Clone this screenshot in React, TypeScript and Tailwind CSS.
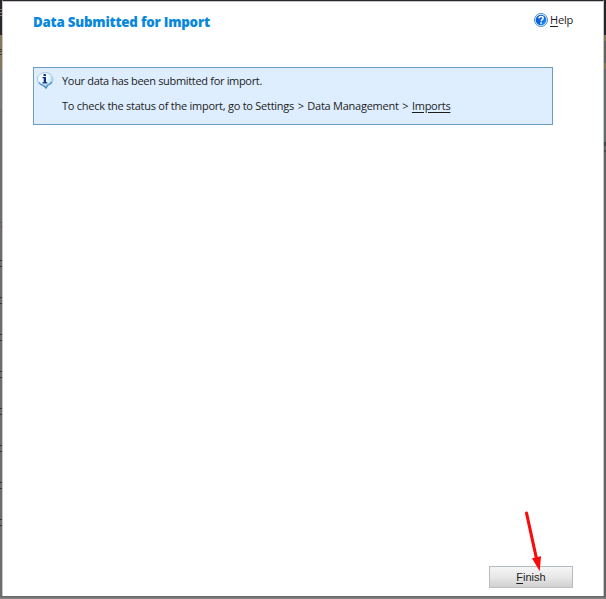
const TICKS = [260, 297, 334, 371, 408, 445, 482, 519];

function InfoIcon() {
  return (
    <svg width="17" height="17" viewBox="0 0 17 17" className="block shrink-0">
      <defs>
        <radialGradient id="bubble" cx="0.4" cy="0.3" r="0.75">
          <stop offset="0" stopColor="#ffffff" />
          <stop offset="0.5" stopColor="#e6f4fd" />
          <stop offset="1" stopColor="#7db9e4" />
        </radialGradient>
      </defs>
      <path d="M8.200 .5C12.600.5 16 3.500 16 7.300c0 2.900-2 5.200-5 6.200L9 16.500 6.400 13.700C3 12.900.4 10.400.4 7.300.4 3.500 3.800.5 8.200.5Z" fill="url(#bubble)" stroke="#9fbdd4" strokeWidth="0.800" />
      <path d="M1.800 10.500c1.200 1.800 3 2.700 4.800 3L9 16l1.400-2.800c2-.6 3.700-1.800 4.400-3.300" fill="none" stroke="#4389bc" strokeWidth="1.200" />
      <rect x="6.500" y="2" width="2.500" height="2" rx="0.500" fill="#08368e" />
      <path d="M5.500 5H9v5.200h1.300v1.300H5.500v-1.300h1.200V6.300H5.500Z" fill="#08368e" />
    </svg>
  );
}

function HelpIcon() {
  return (
    <svg width="14" height="14" viewBox="0 0 14 14" className="block shrink-0">
      <defs>
        <linearGradient id="help" x1="0" y1="0" x2="1" y2="1">
          <stop offset="0" stopColor="#0757c8" />
          <stop offset="0.55" stopColor="#0866df" />
          <stop offset="1" stopColor="#35a7ff" />
        </linearGradient>
      </defs>
      <circle cx="7" cy="7" r="6.500" fill="#e8f6ff" stroke="#3f7fb8" strokeWidth="0.900" />
      <circle cx="7" cy="7" r="5.300" fill="url(#help)" />
      <path d="M4.900 5.400C5 4 6 3.500 7.100 3.500c1.200 0 2.100.6 2.100 1.700 0 1.400-2 1.500-2 3" fill="none" stroke="#fff" strokeWidth="1.500" />
      <rect x="6.300" y="9.300" width="1.600" height="1.500" fill="#fff" />
    </svg>
  );
}

function LeftEdge() {
  return (
    <div className="relative w-0.5 shrink-0 overflow-hidden bg-[#6d6d6d]">
      <div className="h-[35px] bg-[#29272b]" />
      <div className="h-[34px] bg-[#84795a]" />
      <div className="h-10 bg-[#777777]" />
      {[9, 12, 15].map((y) => (
        <div key={y} className="absolute left-0 h-px w-0.5 bg-[#85747c]" style={{ top: y }} />
      ))}
      {[49, 51, 54].map((y) => (
        <div key={y} className="absolute left-0 h-px w-0.5 bg-[#433f34]" style={{ top: y }} />
      ))}
      <div className="absolute left-0 top-[222px] h-px w-0.5 bg-[#415f71]" />
      <div className="absolute left-px top-[226px] h-0.5 w-px bg-[#744939]" />
      {TICKS.map((y) => (
        <div key={y} className="absolute left-0 h-[7px] w-0.5 border-y border-[#353535]" style={{ top: y }} />
      ))}
    </div>
  );
}

function RightEdge() {
  return (
    <div className="w-0.5 shrink-0 bg-[#646464]">
      <div className="h-[35px] bg-[#252527]" />
      <div className="h-1.5 bg-[#81764f]" />
      <div className="h-[22px] bg-[#62655f]" />
      <div className="h-1.5 bg-[#81764f]" />
      <div className="h-[73px] bg-[#686b6b]" />
      <div className="h-1 bg-[#424549]" />
      <div className="h-1" />
      <div className="h-0.5 bg-[#4b4b4b]" />
    </div>
  );
}

export default function App() {
  return (
    <div className="flex h-[599px] w-[606px] flex-col overflow-hidden bg-[#777777] font-['Open_Sans','Noto_Sans',sans-serif] text-[#1c1c1c]">
      <div className="flex h-[596px] shrink-0">
        <LeftEdge />
        <main className="relative flex w-[602px] shrink-0 flex-col border-t border-r border-l border-t-[#29272b] border-r-[#c8c8c8] border-l-[#c9c5c8] bg-white shadow-[inset_0_1px_0_#c9c5c8]">
          <header className="flex h-[66px] items-start justify-between pl-[30px] pr-[30px] pt-[11px]">
            <h1 className="whitespace-nowrap text-[13.300px] leading-5 font-extrabold tracking-[-0.210px] text-[#0788db]">Data Submitted for Import</h1>
            <a className="flex items-center gap-[2px] text-[11px] leading-4 tracking-[-0.200px]">
              <HelpIcon />
              <span><span className="underline underline-offset-2">H</span>elp</span>
            </a>
          </header>
          <section className="ml-[30px] flex h-[58px] w-[520px] border border-[#6f9dbd] bg-[#deeeff] pl-[3px] pt-1">
            <InfoIcon />
            <div className="ml-2 whitespace-nowrap text-[11px] leading-[18px]">
              <p className="tracking-[-0.320px]">Your data has been submitted for import.</p>
              <p className="mt-[7px] tracking-[-0.250px]">To check the status of the import, go to Settings <span className="mx-px">&gt;</span> Data Management <span className="mx-px">&gt;</span> <a className="underline underline-offset-2">Imports</a></p>
            </div>
          </section>
          <button className="mt-auto mr-[30px] mb-2 flex h-[22px] w-[84px] items-center justify-center self-end border border-[#b5bdc3] border-b-[#bfc0c2] bg-linear-to-b from-[#f5f5f5] via-[#e8e8e8] to-[#d0d0d0] font-['Liberation_Sans',Arial,sans-serif] text-[11px]">
            <span><span className="underline underline-offset-2">F</span>inish</span>
          </button>
          <svg width="20" height="62" viewBox="0 0 20 62" className="absolute left-[521px] top-[510px]">
            <path d="M2.500 2 13 50" stroke="#fa0a0a" strokeWidth="3.100" strokeLinecap="round" />
            <path d="m8 47.300 9-2-1.300 15Z" fill="#fa0a0a" />
          </svg>
        </main>
        <RightEdge />
      </div>
      <div className="h-[3px] bg-linear-to-b from-[#626262] to-[#8b8b8b]" />
    </div>
  );
}
